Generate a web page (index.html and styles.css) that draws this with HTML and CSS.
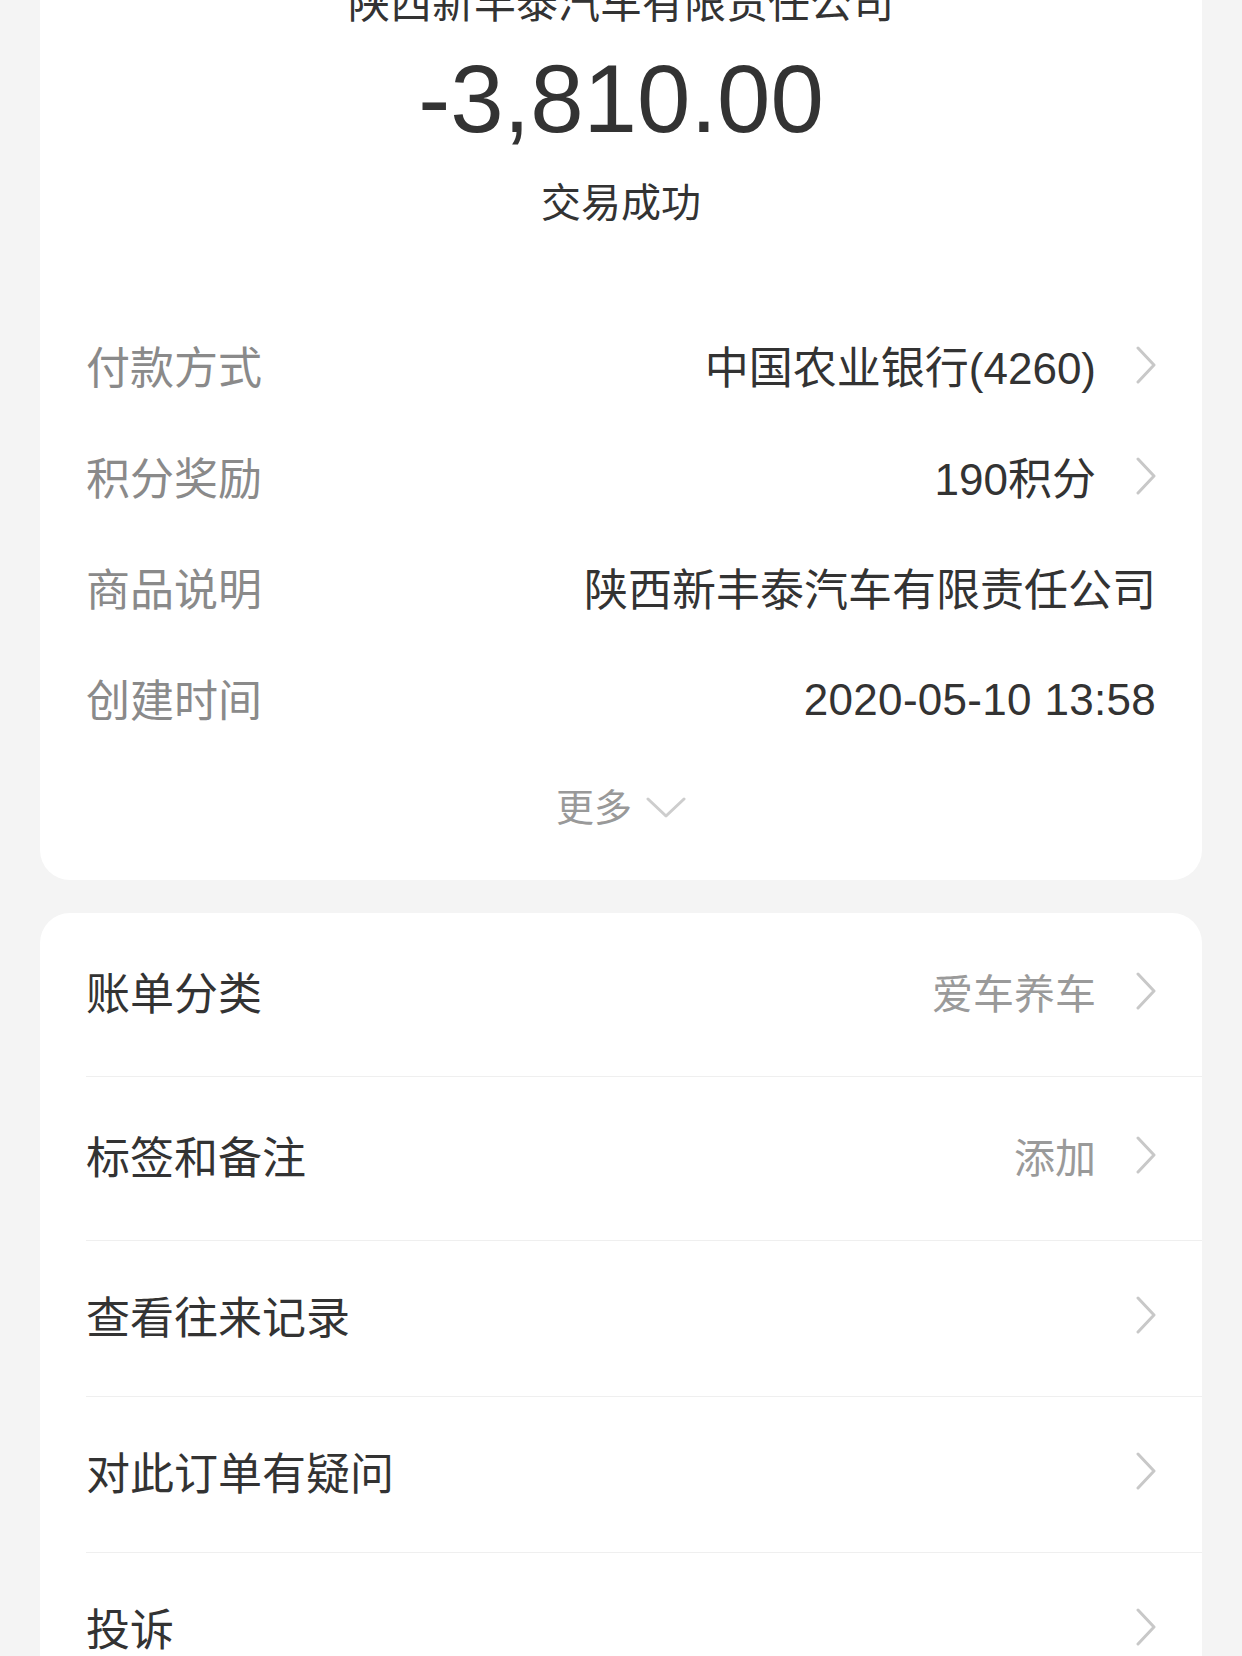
FILE: index.html
```html
<!DOCTYPE html>
<html lang="zh-CN">
<head>
    <meta charset="UTF-8">
    <meta name="viewport" content="width=device-width, initial-scale=1.0">
    <title>账单详情</title>
    <link rel="stylesheet" href="styles.css">
</head>
<body>

<div class="page">
    <div class="card summary">
        <div class="merchant">陕西新丰泰汽车有限责任公司</div>
        <div class="amount">-3,810.00</div>
        <div class="status">交易成功</div>

        <div class="info-list">
            <div class="info-row">
                <span class="info-label">付款方式</span>
                <span class="info-value">中国农业银行(4260)
                    <svg class="chevron" viewBox="0 0 20 38"><polyline points="2,2 18,19 2,36"/></svg>
                </span>
            </div>
            <div class="info-row">
                <span class="info-label">积分奖励</span>
                <span class="info-value">190积分
                    <svg class="chevron" viewBox="0 0 20 38"><polyline points="2,2 18,19 2,36"/></svg>
                </span>
            </div>
            <div class="info-row">
                <span class="info-label">商品说明</span>
                <span class="info-value">陕西新丰泰汽车有限责任公司</span>
            </div>
            <div class="info-row">
                <span class="info-label">创建时间</span>
                <span class="info-value date">2020-05-10 13:58</span>
            </div>
        </div>

        <div class="more">更多
            <svg class="chevron-down" viewBox="0 0 40 22"><polyline points="2,2 20,19 38,2"/></svg>
        </div>
    </div>

    <div class="card actions">
        <div class="action-row tall">
            <span class="action-label">账单分类</span>
            <span class="action-value">爱车养车
                <svg class="chevron" viewBox="0 0 20 38"><polyline points="2,2 18,19 2,36"/></svg>
            </span>
        </div>
        <div class="action-row tall">
            <span class="action-label">标签和备注</span>
            <span class="action-value">添加
                <svg class="chevron" viewBox="0 0 20 38"><polyline points="2,2 18,19 2,36"/></svg>
            </span>
        </div>
        <div class="action-row">
            <span class="action-label">查看往来记录</span>
            <span class="action-value">
                <svg class="chevron" viewBox="0 0 20 38"><polyline points="2,2 18,19 2,36"/></svg>
            </span>
        </div>
        <div class="action-row">
            <span class="action-label">对此订单有疑问</span>
            <span class="action-value">
                <svg class="chevron" viewBox="0 0 20 38"><polyline points="2,2 18,19 2,36"/></svg>
            </span>
        </div>
        <div class="action-row">
            <span class="action-label">投诉</span>
            <span class="action-value">
                <svg class="chevron" viewBox="0 0 20 38"><polyline points="2,2 18,19 2,36"/></svg>
            </span>
        </div>
    </div>
</div>

</body>
</html>
```

FILE: styles.css
```css
body {
    margin: 0;
    background-color: #f4f4f4;
    font-family: "Liberation Sans", "Noto Sans CJK SC", sans-serif;
    color: #333;
}
.page {
    padding: 0 40px;
}
.card {
    background: #fff;
    border-radius: 30px;
}
.summary {
    margin-top: -61px;
    padding: 40px 46px 47px;
    text-align: center;
}
.merchant {
    font-size: 42px;
    line-height: 50px;
    color: #333;
}
.amount {
    margin-top: 15px;
    font-size: 96px;
    line-height: 110px;
    color: #333;
}
.status {
    margin-top: 24px;
    font-size: 40px;
    line-height: 50px;
    color: #333;
}
.info-list {
    margin-top: 81px;
}
.info-row {
    height: 111px;
    display: flex;
    justify-content: space-between;
    align-items: center;
    font-size: 44px;
}
.info-label {
    color: #8a8a8a;
}
.info-value {
    display: flex;
    align-items: center;
    color: #333;
}
.info-value.date {
    padding-top: 5px;
    letter-spacing: 0.3px;
}
.chevron {
    width: 20px;
    height: 38px;
    margin-left: 40px;
    fill: none;
    stroke: #c8c8c8;
    stroke-width: 3;
    stroke-linecap: round;
    stroke-linejoin: round;
}
.more {
    margin-top: 30px;
    display: flex;
    justify-content: center;
    align-items: center;
    font-size: 38px;
    line-height: 50px;
    color: #999;
}
.chevron-down {
    width: 40px;
    height: 22px;
    margin-left: 14px;
    fill: none;
    stroke: #cdcdcd;
    stroke-width: 3;
    stroke-linecap: round;
    stroke-linejoin: round;
}
.actions {
    margin-top: 33px;
    padding-left: 46px;
}
.action-row {
    box-sizing: border-box;
    height: 156px;
    padding: 0 46px 8px 0;
    display: flex;
    justify-content: space-between;
    align-items: center;
    border-bottom: 1px solid #efefef;
}
.action-row.tall {
    height: 164px;
}
.action-label {
    font-size: 44px;
    color: #333;
}
.action-value {
    display: flex;
    align-items: center;
    font-size: 41px;
    color: #9a9a9a;
}
```
